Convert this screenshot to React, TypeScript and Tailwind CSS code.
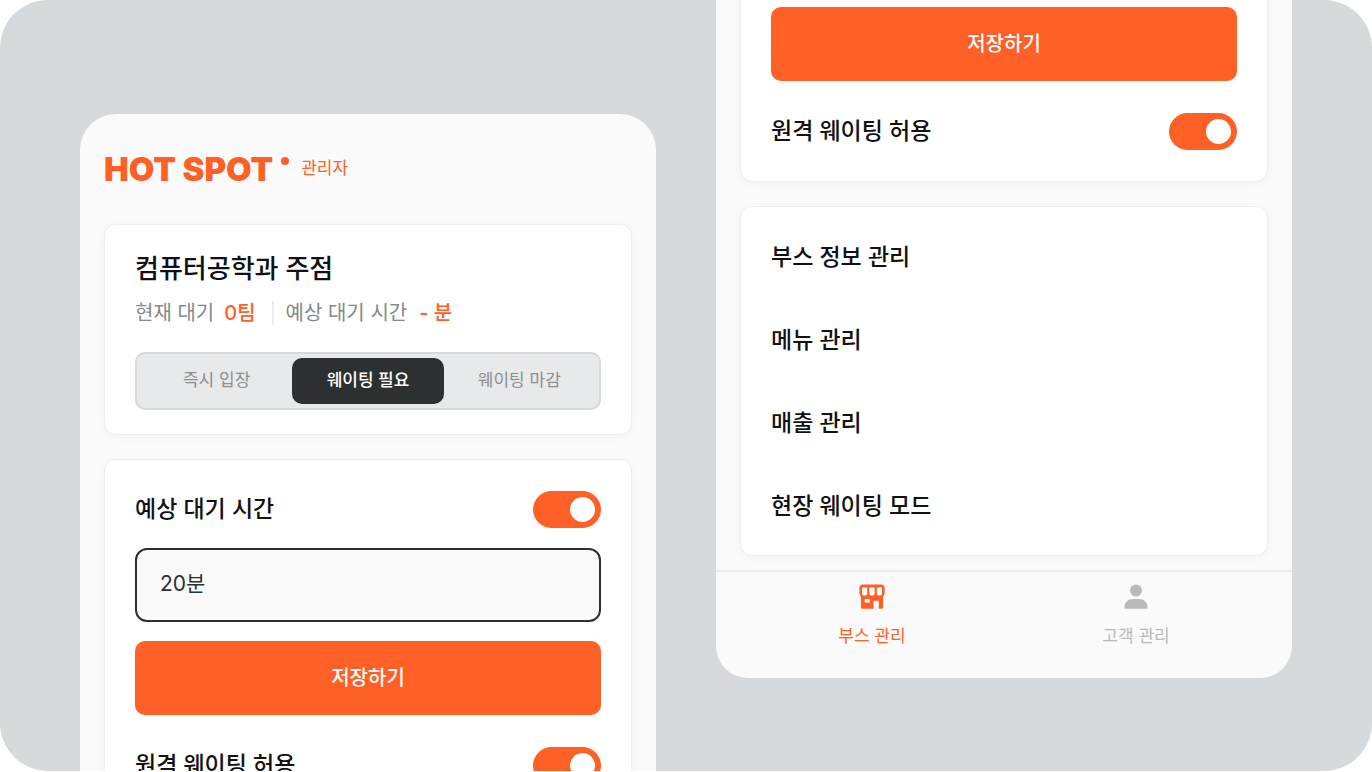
import { useId, useState } from "react"
import type { ReactNode } from "react"

const estados = ["즉시 입장", "웨이팅 필요", "웨이팅 마감"]

const menus = ["부스 정보 관리", "메뉴 관리", "매출 관리", "현장 웨이팅 모드"]

function Card({ children, className = "" }: { children: ReactNode; className?: string }) {
  return (
    <section className={`shrink-0 rounded-xl border border-[#eeeeef] bg-white px-[30px] shadow-[0_2px_8px_rgba(0,0,0,0.04)] ${className}`}>
      {children}
    </section>
  )
}

function ToggleRow({ label }: { label: string }) {
  const id = useId()
  const [checked, setChecked] = useState(true)

  return (
    <div className="flex h-[37px] items-center justify-between">
      <label htmlFor={id} className="pb-px text-[23px] leading-8 font-medium text-[#111111]">{label}</label>
      <input
        id={id}
        type="checkbox"
        role="switch"
        checked={checked}
        onChange={(e) => setChecked(e.target.checked)}
        className="flex h-[37px] w-[68px] cursor-pointer appearance-none items-center rounded-full bg-[#c4c7ca] px-1.5 before:block before:size-[25px] before:rounded-full before:bg-white checked:justify-end checked:bg-[#ff6026]"
      />
    </div>
  )
}

function StatusCard() {
  const [active, setActive] = useState("웨이팅 필요")

  return (
    <Card className="pt-[26px] pb-6">
      <h1 className="text-[26px] leading-9 font-medium text-[#111111]">컴퓨터공학과 주점</h1>
      <div className="mt-2 flex h-9 items-center text-xl text-[#85898c]">
        <span>현재 대기</span>
        <strong className="ml-2.5 font-medium text-[#ff6026]">0팀</strong>
        <span className="mr-3 ml-4 h-6 w-0.5 bg-[#ebeced]" />
        <span>예상 대기 시간</span>
        <strong className="ml-3 font-medium text-[#ff6026]">- 분</strong>
      </div>
      <div className="mt-[21px] grid grid-cols-3 rounded-[10px] border-2 border-[#d5d9dc] bg-[#e8e9eb] p-1">
        {estados.map((item) => (
          <button
            key={item}
            type="button"
            onClick={() => setActive(item)}
            className={`h-[46px] rounded-[10px] text-[17px] ${
              active === item ? "bg-[#2c3031] font-medium text-white" : "text-[#8c8e90]"
            }`}
          >
            {item}
          </button>
        ))}
      </div>
    </Card>
  )
}

function WaitingCard() {
  const [time, setTime] = useState("20분")

  return (
    <Card className="py-[31px]">
      <ToggleRow label="예상 대기 시간" />
      <input
        type="text"
        aria-label="예상 대기 시간 입력"
        value={time}
        onChange={(e) => setTime(e.target.value)}
        className="mt-5 block h-[74px] w-full rounded-xl border-2 border-[#2c3031] bg-[#fafafa] px-[23px] pb-1.5 text-[21px] text-[#2c3031] outline-none"
      />
      <button type="button" className="mt-[19px] mb-8 block h-[74px] w-full rounded-[10px] bg-[#ff6026] text-xl font-medium text-white">
        저장하기
      </button>
      <ToggleRow label="원격 웨이팅 허용" />
    </Card>
  )
}

function StoreIcon() {
  return (
    <svg viewBox="0 0 28 28" className="size-7" aria-hidden="true">
      <path
        fill="#ff6026"
        fillRule="evenodd"
        d="M5 1.500h18a3.600 3.600 0 0 1 3.600 3.600v5.400c0 1.200-.5 2.200-1.500 2.800v11.200a1.300 1.300 0 0 1-1.300 1.300h-3v-7.300a.8.8 0 0 0-.8-.8h-3.700a.8.800 0 0 0-.8.8v7.300H4.200a1.300 1.300 0 0 1-1.300-1.300V13.300c-1-.6-1.500-1.600-1.500-2.800V5.100A3.600 3.600 0 0 1 5 1.500zM4 4.500v5.400a2.600 2.600 0 0 0 5.200 0V4.500zM11.400 4.500v5.400a2.600 2.600 0 0 0 5.200 0V4.500zM18.800 4.500v5.400a2.600 2.600 0 0 0 5.200 0V4.500zM6.700 16v3.600h5V16z"
      />
    </svg>
  )
}

function UserIcon() {
  return (
    <svg viewBox="0 0 28 28" className="size-7" fill="#b8b9ba" aria-hidden="true">
      <circle cx="14" cy="7.500" r="5.900" />
      <path d="M2.500 25.800v-1.500c0-5.200 4-8.300 8.500-8.300h6c4.500 0 8.500 3.100 8.500 8.300v1.500z" />
    </svg>
  )
}

export default function App() {
  return (
    <div className="h-screen bg-white pb-px font-[Inter,'Noto_Sans_CJK_KR',sans-serif]">
      <main className="grid h-full grid-cols-2 gap-[60px] overflow-hidden rounded-[48px] bg-[#d6dadd] px-20">
        {/* Topo da tela de administração */}
        <div className="mt-[114px] flex min-h-0 flex-col gap-6 overflow-hidden rounded-t-[36px] bg-[#fafafa] px-6">
          <header className="-mb-6 flex h-[110px] shrink-0 items-center text-[#ff6026]">
            <span className="text-[33px] leading-none font-black">HOT SPOT</span>
            <span className="mb-4 ml-2 size-2 rounded-full bg-[#ff6026]" />
            <span className="ml-3 text-[17px]">관리자</span>
          </header>
          <StatusCard />
          <WaitingCard />
        </div>

        {/* Final da mesma tela, com a navegação inferior */}
        <div className="mb-[93px] flex min-h-0 flex-col justify-end overflow-hidden rounded-b-[32px] bg-[#fafafa]">
          <div className="flex flex-col gap-6 px-6 pb-3.5">
            <WaitingCard />
            <Card className="flex flex-col gap-[46px] py-[31px]">
              {menus.map((item) => (
                <button key={item} type="button" className="h-[37px] text-left text-[23px] leading-8 font-medium text-[#111111]">
                  {item}
                </button>
              ))}
            </Card>
          </div>
          <nav className="grid h-[108px] shrink-0 grid-cols-2 border-t-2 border-[#ebeced] px-6 pt-[11px] text-[17px]">
            <a href="#booth" className="flex flex-col items-center gap-[13px] text-[#ff6026]">
              <StoreIcon />
              <span className="leading-6">부스 관리</span>
            </a>
            <a href="#customer" className="flex flex-col items-center gap-[13px] text-[#b8b9ba]">
              <UserIcon />
              <span className="leading-6">고객 관리</span>
            </a>
          </nav>
        </div>
      </main>
    </div>
  )
}
